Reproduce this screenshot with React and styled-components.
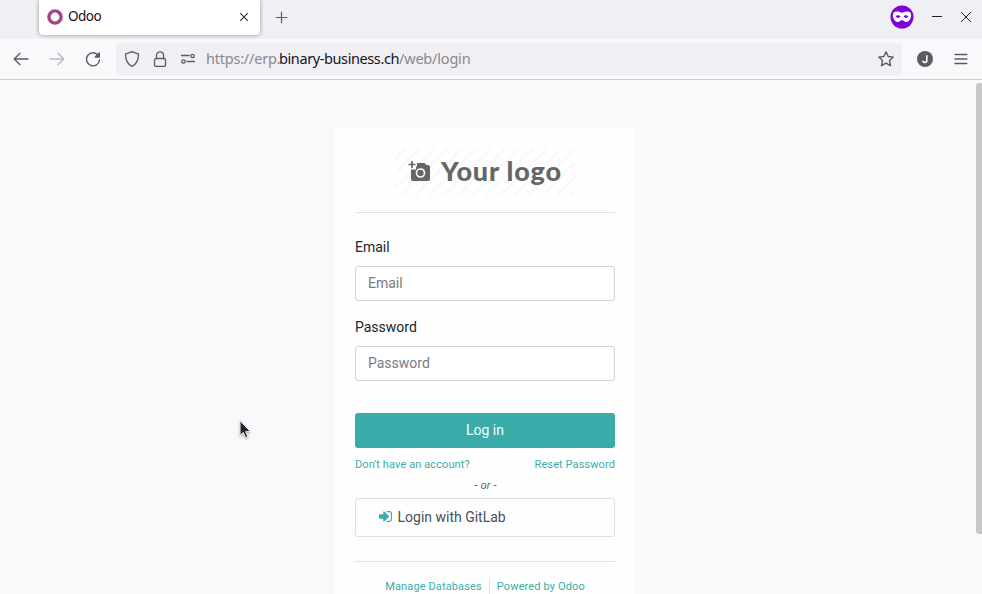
import React from 'react';
import styled, { createGlobalStyle } from 'styled-components';

const Global = createGlobalStyle`
  * { box-sizing: border-box; }
  html, body { margin: 0; height: 100%; overflow: hidden; }
  svg { display: block; flex: none; }
`;

const Window = styled.div`
  position: relative;
  display: flex;
  flex-direction: column;
  width: 982px;
  height: 594px;
  overflow: hidden;
  background: #f8f9fb;
  font-family: 'Noto Sans', sans-serif;
`;

const TabBar = styled.header`
  display: flex;
  height: 39px;
  padding-left: 39px;
  background: #f0eff4;
`;

const Tab = styled.div`
  display: flex;
  align-items: center;
  width: 221px;
  height: 35px;
  padding: 0 11px 2px 8px;
  border-radius: 0 0 4px 4px;
  background: #fff;
  box-shadow: 0 0 4px rgba(0, 0, 0, 0.4);
`;

const TabTitle = styled.span`
  flex: 1;
  margin-left: 5px;
  padding-bottom: 1px;
  color: #15141a;
  font-size: 13.5px;
  line-height: 20px;
  letter-spacing: -0.5px;
`;

const NewTab = styled.div`
  flex: 1;
  padding: 11px 0 0 15px;
`;

const WindowControls = styled.div`
  display: flex;
  align-items: center;
  gap: 18px;
  height: 34px;
  padding-right: 10px;
`;

const Toolbar = styled.nav`
  display: flex;
  align-items: center;
  height: 41px;
  padding: 0 13px;
  border-bottom: 1px solid #cccccf;
  background: #f9f9fb;
`;

const NavButtons = styled.div`
  display: flex;
  align-items: center;
  gap: 20px;
  width: 103px;
`;

const AddressBar = styled.div`
  display: flex;
  align-items: center;
  width: 786px;
  height: 32px;
  padding: 0 8px;
  border-radius: 4px;
  background: #f0eff4;
`;

const SiteIcons = styled.div`
  display: flex;
  gap: 12px;
  width: 82px;
`;

const Url = styled.div`
  display: flex;
  flex: 1;
  padding-bottom: 2px;
  font-size: 14.5px;
  line-height: 22px;
  white-space: pre;
`;

const UrlPart = styled.span`
  width: ${(p) => p.$width}px;
  color: ${(p) => (p.$strong ? '#15141a' : '#8a898f')};
  letter-spacing: ${(p) => p.$spacing}px;
`;

const ToolbarEnd = styled.div`
  display: flex;
  align-items: center;
  gap: 20px;
  margin-left: 15px;
`;

const Page = styled.main`
  display: flex;
  flex: 1;
  justify-content: center;
  min-height: 0;
  padding: 48px 12px 0 0;
  font-family: Roboto, sans-serif;
`;

const Card = styled.section`
  display: flex;
  flex-direction: column;
  width: 300px;
  height: 520px;
  padding: 20px 20px 0;
  border-radius: 2px;
  background: #fefefe;
`;

const LogoArea = styled.div`
  display: flex;
  justify-content: center;
  height: 65px;
  border-bottom: 1px solid #dee2e6;
`;

const Logo = styled.div`
  display: flex;
  align-items: center;
  width: 180px;
  height: 48px;
  padding: 0 0 2px 13px;
  background: repeating-linear-gradient(135deg, #fefefe 0 6.5px, #f8f8f8 7.2px 8.6px, #fefefe 9.3px 10px);
`;

const LogoText = styled.span`
  margin-left: 9px;
  color: #666;
  font: 900 27px/40px Lato, sans-serif;
  letter-spacing: 0.8px;
  white-space: nowrap;
`;

const Form = styled.form`
  display: flex;
  flex-direction: column;
  padding-top: 22px;
`;

const Field = styled.label`
  display: flex;
  flex-direction: column;
  gap: 7px;
  height: 80px;
  color: #212529;
  font-size: 14px;
  line-height: 24px;
`;

const TextInput = styled.input`
  height: 35px;
  padding: 0 12px 2px;
  border: 1px solid #ced4da;
  border-radius: 3px;
  outline: 0;
  background: #fff;
  font: 14px Roboto, sans-serif;
  &::placeholder { color: #777c82; opacity: 1; }
`;

const SubmitButton = styled.button`
  height: 35px;
  margin-top: 18px;
  padding: 0 0 2px;
  border: 0;
  border-radius: 3px;
  background: #3aadaa;
  color: #f2ffff;
  font: 14px Roboto, sans-serif;
`;

const LinkRow = styled.div`
  display: flex;
  justify-content: space-between;
  margin-top: 9px;
`;

const Link = styled.a`
  color: #3aadaa;
  font-size: 11px;
  line-height: 16px;
  letter-spacing: 0.1px;
  white-space: nowrap;
`;

const Divider = styled.em`
  margin-top: 5px;
  padding-left: 1px;
  color: #5f6368;
  font-size: 11.2px;
  line-height: 16px;
  letter-spacing: 0.1px;
  text-align: center;
`;

const ProviderButton = styled.a`
  display: flex;
  align-items: center;
  gap: 5.5px;
  height: 39px;
  margin-top: 4px;
  padding: 0 0 2px 23px;
  border: 1px solid #dee0e2;
  border-radius: 3px;
  color: #495057;
  font-size: 14px;
`;

const Footer = styled.footer`
  display: flex;
  justify-content: center;
  margin-top: 24px;
  padding-top: 17px;
  border-top: 1px solid #dee2e6;
`;

const FooterLink = styled(Link)`
  padding: 0 7px;
  letter-spacing: 0.13px;
  & + & { border-left: 1px solid #dee2e6; }
`;

const ScrollThumb = styled.div`
  position: absolute;
  top: 83px;
  right: -1px;
  width: 7px;
  height: 451px;
  border-radius: 3px;
  background: #c8c8c9;
`;

const Pointer = styled.svg`
  position: absolute;
  top: 419px;
  left: 238px;
  filter: drop-shadow(0 1px 1px rgba(0, 0, 0, 0.35));
`;

function Icon({ size = 16, color = '#5b5b66', width = 1.3, children }) {
  return (
    <svg width={size} height={size} viewBox="0 0 16 16" fill="none" stroke={color}
      strokeWidth={width} strokeLinecap="round" strokeLinejoin="round">
      {children}
    </svg>
  );
}

function BrowserTabs() {
  return (
    <TabBar>
      <Tab>
        <Icon color="#a24689" width={3.4}><circle cx="8" cy="8" r="6.1" /></Icon>
        <TabTitle>Odoo</TabTitle>
        <svg width="10" height="10" viewBox="0 0 10 10" stroke="#303038" strokeWidth="1.1">
          <path d="M1.2 1.2 8.8 8.8M8.8 1.2 1.2 8.8" />
        </svg>
      </Tab>
      <NewTab>
        <svg width="14" height="14" viewBox="0 0 14 14" stroke="#5b5b66" strokeWidth="1.2">
          <path d="M6.5 .8v11.5M.8 6.5h11.5" />
        </svg>
      </NewTab>
      <WindowControls>
        <svg width="24" height="24" viewBox="0 0 24 24">
          <circle cx="12" cy="12" r="11.5" fill="#8000d7" />
          <path fill="#fff" fillRule="evenodd" d="M12 8C14.5 6.200 19 6 20.300 7.500 22.500 10.700 20 16.900 16.200 16.900c-1.900 0-2.600-1.700-4.200-1.700S9.700 16.900 7.800 16.900C4 16.900 1.500 10.700 3.700 7.500 5 6 9.500 6.200 12 8ZM5.800 11.500c1 1.800 3.400 1.900 4.600.1-1.200-1.900-3.700-1.900-4.600-.1Zm7.800.1c1.200 1.800 3.600 1.700 4.600-.1-.9-1.800-3.400-1.800-4.600.1Z" />
        </svg>
        <svg width="10" height="12" viewBox="0 0 10 12" stroke="#222" strokeWidth="1" shapeRendering="crispEdges"><path d="M0 5.500h10" /></svg>
        <svg width="12" height="12" viewBox="0 0 12 12" stroke="#222" strokeWidth="1"><path d="M1 1l10 10M11 1 1 11" /></svg>
      </WindowControls>
    </TabBar>
  );
}

function NavigationBar() {
  return (
    <Toolbar>
      <NavButtons>
        <Icon><path d="M1.200 8H15M7 2.200 1.200 8 7 13.800" /></Icon>
        <Icon color="#b9b9bf"><path d="M1 8h13.800M9 2.200 14.800 8 9 13.800" /></Icon>
        <Icon width={1.4}>
          <path d="M13.300 4.500a6.500 6.500 0 1 0 1.200 4.500" />
          <path d="M14.300 2v4h-4Z" fill="#5b5b66" />
        </Icon>
      </NavButtons>
      <AddressBar>
        <SiteIcons>
          <Icon><path d="M8 .7 14.500 3.200C14.500 9 12.700 13 8 15.400 3.300 13 1.500 9 1.500 3.200Z" /></Icon>
          <Icon><rect x="2.500" y="7.500" width="11" height="8" rx="1.500" /><path d="M4.500 7.500V4.200C4.500-.2 11.500-.2 11.500 4.200v3.300" /></Icon>
          <Icon><path d="M1.500 4.500h7.500M7 10.500h7.500" /><circle cx="12.500" cy="5" r="1.700" /><circle cx="3.500" cy="10.500" r="1.700" /></Icon>
        </SiteIcons>
        <Url>
          <UrlPart $width={73} $spacing={-0.22}>https://erp.</UrlPart>
          <UrlPart $width={120} $spacing={-0.4} $strong>binary-business.ch</UrlPart>
          <UrlPart $width={72} $spacing={-0.2}>/web/login</UrlPart>
        </Url>
        <Icon width={1.4}><path d="m8 .8 2.200 4.700 5.100.6-3.800 3.500 1 5.100L8 12.200l-4.500 2.500 1-5.100L.7 6.100l5.100-.6Z" /></Icon>
      </AddressBar>
      <ToolbarEnd>
        <svg width="16" height="16" viewBox="0 0 16 16">
          <circle cx="8" cy="8" r="8" fill="#5b5b66" />
          <path d="M9.800 4.300v5.200c0 2.500-3.900 2.300-4 .2" fill="none" stroke="#fff" strokeWidth="1.600" />
        </svg>
        <Icon width={1.4}><path d="M2 3.500h11.800M2 8h11.800M2 12.500h11.800" /></Icon>
      </ToolbarEnd>
    </Toolbar>
  );
}

function CompanyLogo() {
  return (
    <LogoArea>
      <Logo>
        <svg width="24" height="22" viewBox="0 0 24 22">
          <path d="M4 1v7M.5 4.500h7" stroke="#666" strokeWidth="1.700" />
          <path fill="#666" d="M9 3h7.500l2 2H20q2 0 2 2v12q0 2-2 2H5q-2 0-2-2V9.500H8V6.500h1Z" />
          <circle cx="12.500" cy="13" r="4" fill="none" stroke="#fefefe" strokeWidth="1.700" />
        </svg>
        <LogoText>Your logo</LogoText>
      </Logo>
    </LogoArea>
  );
}

export default function App() {
  return (
    <Window>
      <Global />
      <BrowserTabs />
      <NavigationBar />
      <Page>
        <Card>
          <CompanyLogo />
          <Form>
            <Field>Email<TextInput type="text" placeholder="Email" /></Field>
            <Field>Password<TextInput type="password" placeholder="Password" /></Field>
            <SubmitButton type="button">Log in</SubmitButton>
            <LinkRow>
              <Link>Don't have an account?</Link>
              <Link>Reset Password</Link>
            </LinkRow>
            <Divider>- or -</Divider>
            <ProviderButton>
              <svg width="13" height="11" viewBox="0 256 1536 1280" fill="#3aadaa">
                <path d="M1184 896q0 26-19 45l-544 544q-19 19-45 19t-45-19-19-45v-288h-448q-26 0-45-19t-19-45v-384q0-26 19-45t45-19h448v-288q0-26 19-45t45-19 45 19l544 544q19 19 19 45zm352-352v704q0 119-84.500 203.500t-203.500 84.500h-320q-13 0-22.500-9.500t-9.500-22.500q0-4-1-20t-.5-26.500 3-23.500 10-19.500 20.500-6.500h320q66 0 113-47t47-113v-704q0-66-47-113t-113-47h-312l-11.500-1-11.500-3-8-5.500-7-9-2-13.500q0-4-1-20t-.5-26.500 3-23.500 10-19.500 20.500-6.500h320q119 0 203.500 84.500t84.500 203.500z" />
              </svg>
              Login with GitLab
            </ProviderButton>
          </Form>
          <Footer>
            <FooterLink>Manage Databases</FooterLink>
            <FooterLink>Powered by Odoo</FooterLink>
          </Footer>
        </Card>
      </Page>
      <ScrollThumb />
      <Pointer width="14" height="22" viewBox="0 0 14 22">
        <path d="M2 1.500v15l3.300-3 2.200 5.200 2.400-1-2.200-5H12.500Z" fill="#222529" stroke="#fff" strokeWidth="1" />
      </Pointer>
    </Window>
  );
}
